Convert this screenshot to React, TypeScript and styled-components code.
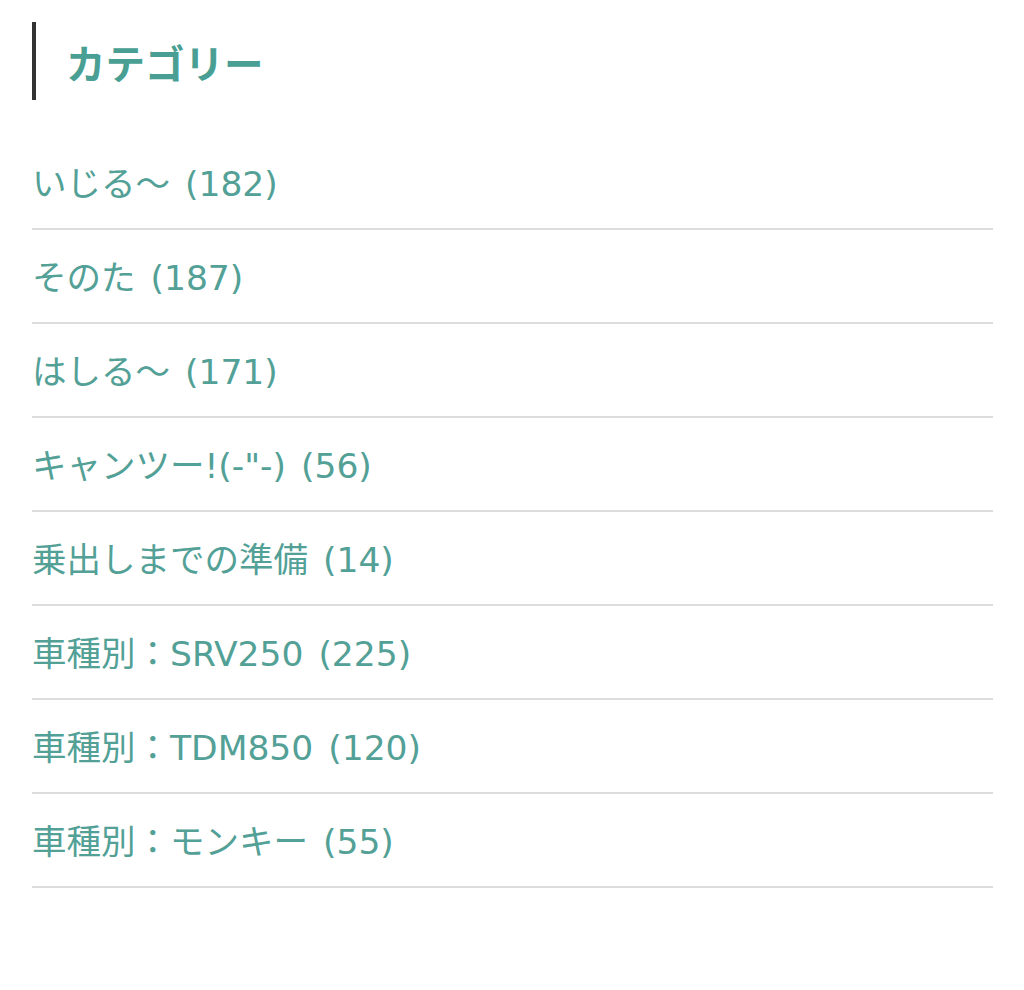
import * as React from 'react';
import styled, { createGlobalStyle } from 'styled-components';

const GlobalStyle = createGlobalStyle`
  html, body {
    margin: 0;
    padding: 0;
    background: #fff;
  }
  body {
    font-family: "DejaVu Sans", "Noto Sans CJK JP", sans-serif;
  }
`;

const Widget = styled.section`
  padding: 22px 31px 0 32px;
`;

const Title = styled.h2`
  margin: 0;
  border-left: 4px solid #333;
  padding-left: 30px;
  height: 78px;
  display: flex;
  align-items: center;
  font-family: "Noto Sans CJK JP", sans-serif;
  font-size: 39.5px;
  font-weight: 700;
  color: #4a9f94;
`;

const List = styled.ul`
  list-style: none;
  margin: 36px 0 0;
  padding: 0;
`;

const Item = styled.li`
  border-bottom: 2px solid #dcdcdc;
  height: 92px;
  display: flex;
  align-items: center;
`;

const Link = styled.a`
  color: #52a096;
  text-decoration: none;
  font-size: 34.5px;
  line-height: 1;
  word-spacing: 4px;
  padding-top: 4px;
`;

const categories = [
  { name: 'いじる〜', count: 182 },
  { name: 'そのた', count: 187 },
  { name: 'はしる〜', count: 171 },
  { name: 'キャンツー!(-"-)', count: 56 },
  { name: '乗出しまでの準備', count: 14 },
  { name: '車種別：SRV250', count: 225 },
  { name: '車種別：TDM850', count: 120 },
  { name: '車種別：モンキー', count: 55 },
];

const App: React.FC = () => (
  <>
    <GlobalStyle />
    <Widget>
      <Title>カテゴリー</Title>
      <List>
        {categories.map(c => (
          <Item key={c.name}>
            <Link href="#">{`${c.name} (${c.count})`}</Link>
          </Item>
        ))}
      </List>
    </Widget>
  </>
);

export default App;
